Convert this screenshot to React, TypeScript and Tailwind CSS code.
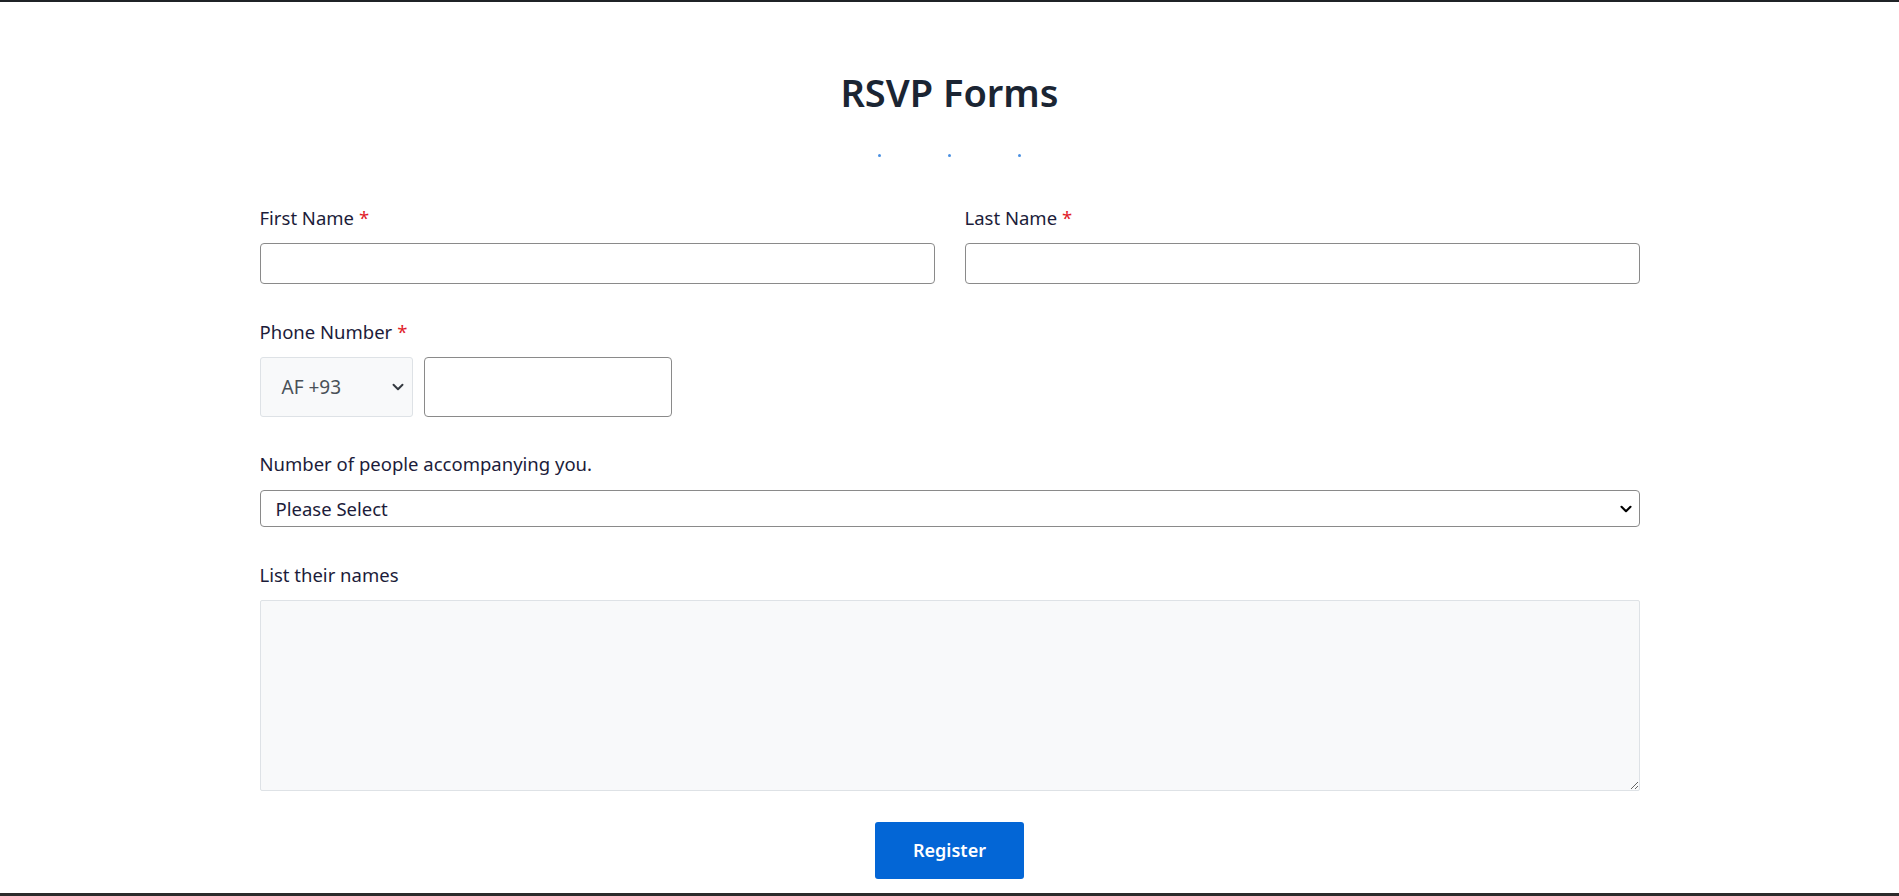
import { ChevronDown } from "lucide-react";

function Label({ text, required }: { text: string; required?: boolean }) {
  return (
    <label className="block text-[18.5px] leading-[24px] text-[#1c1c3a]">
      {text}
      {required && <span className="ml-[5px] text-[#e11d2a]">*</span>}
    </label>
  );
}

export default function App() {
  return (
    <div className="h-screen flex flex-col border-t-2 border-b-[3px] border-t-[#1f2326] border-b-[#2b2b2b] bg-white font-['Noto_Sans',sans-serif]">
      {/* heading */}
      <div className="pt-[64px] flex flex-col items-center">
        <h1 className="text-[38px] leading-[52px] font-semibold text-[#1b2533]">RSVP Forms</h1>
        <div className="mt-[36px] flex gap-[67px]">
          <span className="w-[3px] h-[3px] rounded-full bg-[#4a90e2]" />
          <span className="w-[3px] h-[3px] rounded-full bg-[#4a90e2]" />
          <span className="w-[3px] h-[3px] rounded-full bg-[#4a90e2]" />
        </div>
      </div>

      {/* form */}
      <form className="w-[1380px] mx-auto mt-[49px]">
        <section className="grid grid-cols-2 gap-[30px]">
          <div>
            <Label text="First Name" required />
            <input className="mt-[13px] block w-full h-[41px] border border-[#8a8a8a] rounded-[4px] px-3" />
          </div>
          <div>
            <Label text="Last Name" required />
            <input className="mt-[13px] block w-full h-[41px] border border-[#8a8a8a] rounded-[4px] px-3" />
          </div>
        </section>

        <section className="mt-[36px]">
          <Label text="Phone Number" required />
          <div className="mt-[13px] flex gap-[11px]">
            <div className="w-[153px] h-[60px] flex items-center justify-between pl-[21px] pr-[5px] bg-[#f8f9fa] border border-[#dee2e6] rounded-[3px] text-[19px] text-[#495057]">
              <span>AF +93</span>
              <ChevronDown size={18} strokeWidth={2.6} className="text-[#343a40]" />
            </div>
            <input className="w-[248px] h-[60px] border border-[#8a8a8a] rounded-[4px] px-3" />
          </div>
        </section>

        <section className="mt-[35px]">
          <Label text="Number of people accompanying you." />
          <div className="mt-[14px] h-[37px] flex items-center justify-between pl-[15px] pr-[4px] border border-[#8a8a8a] rounded-[4px] text-[18.5px] text-[#1c1c3a]">
            <span>Please Select</span>
            <ChevronDown size={18} strokeWidth={2.8} className="text-black" />
          </div>
        </section>

        <section className="mt-[36px]">
          <Label text="List their names" />
          <textarea className="mt-[13px] block w-full h-[191px] bg-[#f8f9fa] border border-[#dee2e6] rounded-[2px]" />
        </section>

        <div className="mt-[31px] flex justify-center">
          <button type="button" className="w-[149px] h-[57px] bg-[#0366d6] rounded-[3px] text-white text-[18px] font-semibold">
            Register
          </button>
        </div>
      </form>
    </div>
  );
}
